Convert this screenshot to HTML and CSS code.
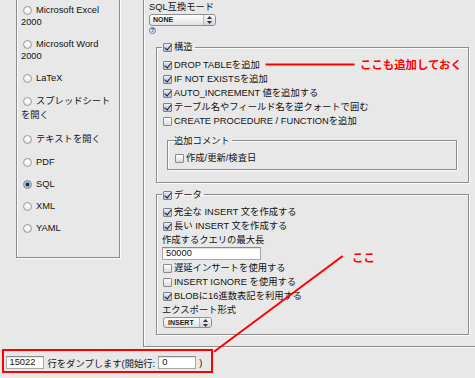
FILE: index.html
```html
<!DOCTYPE html>
<html lang="ja">
<head>
<meta charset="utf-8">
<title>エクスポート</title>
<link rel="stylesheet" href="styles.css">
</head>
<body>
<div class="columns">
  <fieldset class="formats">
    <label class="opt"><span class="radio"></span>Microsoft Excel 2000</label>
    <label class="opt"><span class="radio"></span>Microsoft Word 2000</label>
    <label class="opt"><span class="radio"></span>LaTeX</label>
    <label class="opt ja"><span class="radio"></span>スプレッドシートを開く</label>
    <label class="opt ja"><span class="radio"></span>テキストを開く</label>
    <label class="opt"><span class="radio"></span>PDF</label>
    <label class="opt"><span class="radio on"></span>SQL</label>
    <label class="opt"><span class="radio"></span>XML</label>
    <label class="opt"><span class="radio"></span>YAML</label>
  </fieldset>
  <fieldset class="options">
    <div class="caption">SQL互換モード</div>
    <div class="popup popup-mode"><span class="popup-value">NONE</span><span class="popup-arrows"><svg width="5" height="8" viewBox="0 0 5 8"><polygon points="2.5,0 5,3 0,3" fill="#333"/><polygon points="0,5 5,5 2.5,8" fill="#333"/></svg></span></div>
    <div class="help">?</div>
    <fieldset class="group group-structure">
      <legend><span class="cb on"></span>構造</legend>
      <label class="chk"><span class="cb on"></span>DROP TABLEを追加</label>
      <label class="chk"><span class="cb on"></span>IF NOT EXISTSを追加</label>
      <label class="chk"><span class="cb on"></span>AUTO_INCREMENT 値を追加する</label>
      <label class="chk"><span class="cb on"></span>テーブル名やフィールド名を逆クォートで囲む</label>
      <label class="chk"><span class="cb"></span>CREATE PROCEDURE / FUNCTIONを追加</label>
      <fieldset class="group group-comment">
        <legend>追加コメント</legend>
        <label class="chk"><span class="cb"></span>作成/更新/検査日</label>
      </fieldset>
    </fieldset>
    <fieldset class="group group-data">
      <legend><span class="cb on"></span>データ</legend>
      <label class="chk"><span class="cb on"></span>完全な INSERT 文を作成する</label>
      <label class="chk"><span class="cb on"></span>長い INSERT 文を作成する</label>
      <div class="field-label">作成するクエリの最大長</div>
      <div class="text-input input-maxlen">50000</div>
      <label class="chk"><span class="cb"></span>遅延インサートを使用する</label>
      <label class="chk"><span class="cb"></span>INSERT IGNORE を使用する</label>
      <label class="chk"><span class="cb on"></span>BLOBに16進数表記を利用する</label>
      <div class="field-label">エクスポート形式</div>
      <div class="popup popup-type"><span class="popup-value">INSERT</span><span class="popup-arrows"><svg width="5" height="8" viewBox="0 0 5 8"><polygon points="2.5,0 5,3 0,3" fill="#333"/><polygon points="0,5 5,5 2.5,8" fill="#333"/></svg></span></div>
    </fieldset>
  </fieldset>
</div>
<div class="dump">
  <span class="text-input input-rows">15022</span>
  <span class="dump-text">行をダンプします(開始行:</span>
  <span class="text-input input-start">0</span>
  <span class="dump-close">)</span>
</div>
<svg class="marks" width="475" height="378" viewBox="0 0 475 378">
  <line x1="265.5" y1="64.5" x2="354.5" y2="64.5" stroke="#f00" stroke-width="2"/>
  <line x1="342.7" y1="256" x2="214" y2="351.7" stroke="#f00" stroke-width="2"/>
</svg>
<span class="note note-top">ここも追加しておく</span>
<span class="note note-here">ここ</span>
</body>
</html>
```

FILE: styles.css
```css
html, body {
  margin: 0;
  padding: 0;
  overflow: hidden;
}
body {
  position: relative;
  width: 475px;
  height: 378px;
  background: #e8e8e8;
  color: #111;
  font-family: "Liberation Sans", "Noto Sans CJK JP", sans-serif;
  font-size: 9.3px;
}
fieldset {
  min-width: 0;
  margin: 0;
  box-sizing: border-box;
  border: 1px solid #8c8c8c;
  box-shadow: 1px 1px 0 #fbfbfb, inset 1px 1px 0 #fbfbfb;
}
legend {
  padding: 0 2px 0 1px;
  margin-left: -1px;
  line-height: 14px;
  white-space: nowrap;
}
.columns {
  display: flex;
  align-items: flex-start;
  margin-top: -8px;
}

/* left: format radios */
.formats {
  flex-shrink: 0;
  width: 104px;
  margin-left: 16px;
  padding: 11px 6px 23px 4px;
}
.opt {
  display: block;
  line-height: 12.2px;
  margin-bottom: 9.6px;
}
.opt.ja { line-height: 14.5px; }
.opt:last-child { margin-bottom: 0; }
.radio {
  display: inline-block;
  width: 9px;
  height: 9px;
  box-sizing: border-box;
  border: 1px solid #9a9a9a;
  border-radius: 50%;
  background: radial-gradient(circle at 50% 35%, #fff, #e2e2e2);
  vertical-align: -2px;
  margin: 0 4px 0 2px;
}
.radio.on {
  background: radial-gradient(circle, #1f2a3c 0 1.5px, #9fb0cf 2.2px, #eef1f7 100%);
  border-color: #7d8797;
}

/* right: options */
.options {
  flex-shrink: 0;
  width: 345px;
  margin-left: 23px;
  padding: 8px 0 11px 5px;
}
.caption {
  line-height: 12px;
}
.popup {
  display: flex;
  box-sizing: border-box;
  border: 1px solid #8e8e8e;
  border-radius: 3px;
  background: linear-gradient(#ffffff, #e1e1e1);
  overflow: hidden;
}
.popup-mode {
  width: 67px;
  height: 12px;
  margin-top: 1px;
}
.popup-type {
  width: 49px;
  height: 11px;
}
.popup-value {
  flex: 1;
  padding-left: 3px;
  font-size: 7px;
  font-weight: bold;
  line-height: 10px;
  color: #1a1a1a;
}
.popup-type .popup-value { line-height: 9px; padding-left: 4px; }
.popup-arrows {
  width: 11px;
  display: flex;
  align-items: center;
  justify-content: center;
  border-left: 1px solid #b8b8b8;
  background: linear-gradient(#f6f7fa, #cdd3de);
}
.help {
  width: 7px;
  height: 7px;
  margin-top: 1px;
  box-sizing: border-box;
  border: 1px solid #6a78b8;
  border-radius: 50%;
  background: #dfe3f6;
  color: #34418f;
  font-size: 6px;
  font-weight: bold;
  line-height: 5px;
  text-align: center;
}
.group {
  width: 313px;
  margin-left: 7px;
  padding: 3.5px 11px 12px 6px;
}
.group-structure { margin-top: 6px; }
.group-data {
  margin-top: 5px;
  padding-bottom: 6px;
}
.group-comment {
  width: 290px;
  margin: 6px 0 0 4px;
  padding: 3.4px 6px 4px 6px;
}
.group-comment legend { padding: 0 2px 0 0; margin-left: 0; }
.group-comment .chk { padding-left: 1px; }
.chk {
  display: block;
  line-height: 14px;
  white-space: nowrap;
}
.field-label {
  line-height: 14px;
  margin-left: -1px;
}
.cb {
  position: relative;
  display: inline-block;
  width: 9px;
  height: 9px;
  box-sizing: border-box;
  border: 1px solid #8a8a8a;
  border-radius: 1px;
  background: linear-gradient(#ffffff, #dadada);
  vertical-align: -2px;
  margin-right: 2px;
}
.cb.on {
  background: linear-gradient(#e9edf5, #b3bfd6);
  border-color: #7a8190;
}
.cb.on::after {
  content: "";
  position: absolute;
  left: 2px;
  top: -1px;
  width: 3px;
  height: 6px;
  border: solid #1b1b1b;
  border-width: 0 1.6px 1.6px 0;
  transform: rotate(40deg);
}
.text-input {
  box-sizing: border-box;
  background: #fff;
  border: 1px solid #a8a8a8;
  border-top-color: #8a8a8a;
  box-shadow: inset 0 1px 1px rgba(0,0,0,0.12);
  font-size: 9.3px;
  line-height: 11px;
  padding-left: 3px;
  color: #111;
}
.input-maxlen {
  width: 99px;
  height: 13px;
  margin: 0 0 1px -1px;
}

/* row count line */
.dump {
  display: flex;
  align-items: center;
  width: 211px;
  height: 24px;
  box-sizing: border-box;
  margin: 1.5px 0 0 2px;
  border: 2px solid #f00;
  padding: 3.5px 0 0 1.5px;
}
.input-rows, .input-start {
  display: block;
  width: 38px;
  height: 13px;
}
.dump-text { margin: 0 3px 0 4px; white-space: nowrap; }
.dump-close { margin-left: 3px; }

/* annotations */
.marks {
  position: absolute;
  left: 0;
  top: 0;
  pointer-events: none;
}
.note {
  position: absolute;
  color: #f00;
  font-family: "Noto Sans CJK JP", sans-serif;
  font-weight: bold;
  font-size: 11.4px;
  line-height: 14px;
  white-space: nowrap;
}
.note-top { left: 360px; top: 57px; }
.note-here { left: 352px; top: 250px; }
```
